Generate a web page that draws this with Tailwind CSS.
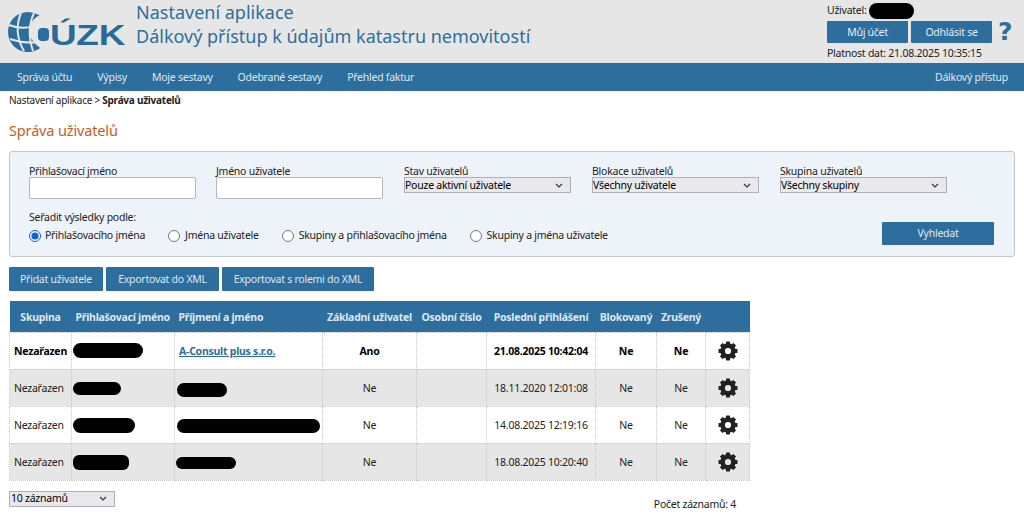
<!DOCTYPE html>
<html lang="cs">
<head>
  <meta charset="UTF-8" />
  <title>Správa uživatelů</title>
  <script src="https://cdn.jsdelivr.net/npm/@tailwindcss/browser@4"></script>
</head>
<body class="bg-white text-[#222] font-['Noto_Sans',sans-serif] text-[10.5px] tracking-[-0.25px] overflow-hidden">

  <svg class="hidden">
    <symbol id="gear" viewBox="0 0 20 20">
      <circle cx="10" cy="10" r="5.4" fill="none" stroke="#222" stroke-width="4.6"/>
      <g fill="#222">
        <rect x="8" y="0.5" width="4" height="4" rx="0.5"/>
        <rect x="8" y="0.5" width="4" height="4" rx="0.5" transform="rotate(45 10 10)"/>
        <rect x="8" y="0.5" width="4" height="4" rx="0.5" transform="rotate(90 10 10)"/>
        <rect x="8" y="0.5" width="4" height="4" rx="0.5" transform="rotate(135 10 10)"/>
        <rect x="8" y="0.5" width="4" height="4" rx="0.5" transform="rotate(180 10 10)"/>
        <rect x="8" y="0.5" width="4" height="4" rx="0.5" transform="rotate(225 10 10)"/>
        <rect x="8" y="0.5" width="4" height="4" rx="0.5" transform="rotate(270 10 10)"/>
        <rect x="8" y="0.5" width="4" height="4" rx="0.5" transform="rotate(315 10 10)"/>
      </g>
    </symbol>
    <symbol id="chevron" viewBox="0 0 8 5">
      <path d="M1 1l3 3 3-3" stroke="#333" stroke-width="1.2" fill="none"/>
    </symbol>
  </svg>

  <!-- Header -->
  <header class="h-[63px] bg-[#e6e6e6] flex">
    <svg class="ml-[7px] mt-[6px] w-[120px] h-[48px] shrink-0" viewBox="0 0 120 48">
      <circle cx="21" cy="26" r="20" fill="#2e6e9e"/>
      <path d="M2 19 Q20 26 38 15 M3 33 Q18 38 34 36 M14 7 Q6 26 17 45 M27 7 Q19 24 26 45" stroke="#e6e6e6" stroke-width="2" fill="none"/>
      <path d="M38 7 Q22 12 22 26 Q24 38 40 46 L50 46 L50 7Z" fill="#e6e6e6"/>
      <rect x="31" y="22" width="11" height="13" rx="4" fill="#2e6e9e"/>
      <text x="43" y="39" font-family="Liberation Sans" font-weight="700" font-size="30" textLength="75" lengthAdjust="spacingAndGlyphs" fill="#2a6a98">ÚZK</text>
    </svg>
    <div class="ml-[9px] text-[18px] tracking-normal leading-[24px] text-[#2e6e9e]">
      <div>Nastavení aplikace</div>
      <div>Dálkový přístup k údajům katastru nemovitostí</div>
    </div>
    <div class="ml-auto w-[197px] shrink-0 pt-[4px]">
      <div class="flex items-center h-[13px]">Uživatel:
        <span class="ml-[2px] w-[45px] h-[16px] bg-black rounded-full"></span>
      </div>
      <div class="flex items-center mt-[4px] gap-[3px]">
        <button class="w-[81px] h-[22px] pt-[1px] bg-[#2e6e9e] text-[#e4ecf3] rounded-[1px]">Můj účet</button>
        <button class="w-[81px] h-[22px] pt-[1px] bg-[#2e6e9e] text-[#e4ecf3] rounded-[1px]">Odhlásit se</button>
        <span class="ml-[3px] font-['DejaVu_Sans',sans-serif] font-bold text-[25px] leading-[22px] text-[#2e6e9e]">?</span>
      </div>
      <div class="mt-[3px] leading-[14px]">Platnost dat: 21.08.2025 10:35:15</div>
    </div>
  </header>

  <!-- Menu -->
  <nav class="h-[28px] pt-[1px] bg-[#2e6e9e] text-[#dfe8f0] flex items-center pl-[17px] pr-[16px] gap-[25px]">
    <a href="#">Správa účtu</a>
    <a href="#">Výpisy</a>
    <a href="#">Moje sestavy</a>
    <a href="#">Odebrané sestavy</a>
    <a href="#">Přehled faktur</a>
    <a href="#" class="ml-auto">Dálkový přístup</a>
  </nav>

  <main class="px-[9px]">
    <div class="h-[19px] flex items-center text-[10px]">Nastavení aplikace &gt;&nbsp;<strong>Správa uživatelů</strong></div>
    <h1 class="mt-[10px] text-[14.5px] tracking-[-0.15px] leading-[20px] text-[#cf5a1c]">Správa uživatelů</h1>

    <!-- Filter -->
    <section class="mt-[11px] w-[1006px] h-[106px] bg-[#eef3fa] border border-[#c4c8cc] rounded-[3px] relative pl-[19px]">
      <div class="flex pt-[13px]">
        <label class="w-[187px] block leading-[13px]">Přihlašovací jméno
          <input type="text" class="block mt-[-1px] w-[167px] h-[22px] bg-white border border-[#b5b5b5] rounded-[2px]" />
        </label>
        <label class="w-[188px] block leading-[13px]">Jméno uživatele
          <input type="text" class="block mt-[-1px] w-[167px] h-[22px] bg-white border border-[#b5b5b5] rounded-[2px]" />
        </label>
        <div class="w-[188px] leading-[13px]">Stav uživatelů
          <div class="mt-[-1px] w-[167px] h-[16px] bg-[#e9e9ed] border border-[#b0b0b0] flex items-center justify-between pr-[7px] text-black">Pouze aktivní uživatele
            <svg class="w-[8px] h-[5px]"><use href="#chevron"/></svg>
          </div>
        </div>
        <div class="w-[188px] leading-[13px]">Blokace uživatelů
          <div class="mt-[-1px] w-[167px] h-[16px] bg-[#e9e9ed] border border-[#b0b0b0] flex items-center justify-between pr-[7px] text-black">Všechny uživatele
            <svg class="w-[8px] h-[5px]"><use href="#chevron"/></svg>
          </div>
        </div>
        <div class="w-[167px] leading-[13px]">Skupina uživatelů
          <div class="mt-[-1px] w-[167px] h-[16px] bg-[#e9e9ed] border border-[#b0b0b0] flex items-center justify-between pr-[7px] text-black">Všechny skupiny
            <svg class="w-[8px] h-[5px]"><use href="#chevron"/></svg>
          </div>
        </div>
      </div>
      <div class="mt-[11px] leading-[14px]">Seřadit výsledky podle:</div>
      <div class="mt-[5px] flex items-center h-[14px]">
        <input type="radio" name="sort" checked class="w-[12px] h-[12px] m-0 accent-[#0b62d6]" />
        <span class="ml-[4px] mr-[23px]">Přihlašovacího jména</span>
        <input type="radio" name="sort" class="w-[12px] h-[12px] m-0" />
        <span class="ml-[5px] mr-[23px]">Jména uživatele</span>
        <input type="radio" name="sort" class="w-[12px] h-[12px] m-0" />
        <span class="ml-[5px] mr-[23px]">Skupiny a přihlašovacího jména</span>
        <input type="radio" name="sort" class="w-[12px] h-[12px] m-0" />
        <span class="ml-[5px]">Skupiny a jména uživatele</span>
      </div>
      <button class="absolute right-[20px] top-[70px] w-[112px] h-[23px] pt-[1px] bg-[#2e6e9e] text-[#dfe8f0] rounded-[1px]">Vyhledat</button>
    </section>

    <!-- Actions -->
    <div class="mt-[10px] flex gap-[3px] h-[24px]">
      <button class="w-[94px] pt-[1px] bg-[#2e6e9e] text-[#dfe8f0] rounded-[1px]">Přidat uživatele</button>
      <button class="w-[113px] pt-[1px] bg-[#2e6e9e] text-[#dfe8f0] rounded-[1px]">Exportovat do XML</button>
      <button class="w-[152px] pt-[1px] bg-[#2e6e9e] text-[#dfe8f0] rounded-[1px]">Exportovat s rolemi do XML</button>
    </div>

    <!-- Table -->
    <table class="mt-[10px] w-[740px] table-fixed border-collapse [&_td]:border [&_td]:border-dotted [&_td]:border-[#c8c8c8] [&_td]:pt-[2px] [&_th]:pt-[3px]">
      <colgroup>
        <col class="w-[62px]" /><col class="w-[103px]" /><col class="w-[148px]" /><col class="w-[94px]" /><col class="w-[70px]" /><col class="w-[109px]" /><col class="w-[61px]" /><col class="w-[49px]" /><col class="w-[44px]" />
      </colgroup>
      <thead class="bg-[#2e6e9e] text-[#dfe8f0] font-bold whitespace-nowrap">
        <tr class="h-[31px]">
          <th>Skupina</th><th class="text-left pl-[4px]">Přihlašovací jméno</th><th class="text-left pl-[4px]">Příjmení a jméno</th><th>Základní uživatel</th><th>Osobní číslo</th><th>Poslední přihlášení</th><th>Blokovaný</th><th>Zrušený</th><th></th>
        </tr>
      </thead>
      <tbody>
        <tr class="h-[37px] font-bold text-black">
          <td class="pl-[4px]">Nezařazen</td>
          <td class="pl-[1px]"><span class="block w-[70px] h-[15px] mt-[-3px] bg-black rounded-full"></span></td>
          <td class="pl-[4px]"><a href="#" class="text-[#2e6e9e] underline">A-Consult plus s.r.o.</a></td>
          <td class="text-center">Ano</td>
          <td></td>
          <td class="text-center">21.08.2025 10:42:04</td>
          <td class="text-center">Ne</td>
          <td class="text-center">Ne</td>
          <td><svg class="mx-auto mt-[-2px] w-[20px] h-[20px]"><use href="#gear"/></svg></td>
        </tr>
        <tr class="h-[37px] bg-[#e6e6e6]">
          <td class="pl-[4px]">Nezařazen</td>
          <td class="pl-[1px]"><span class="block w-[48px] h-[13px] bg-black rounded-full"></span></td>
          <td class="pl-[2px]"><span class="block w-[50px] h-[14px] bg-black rounded-full mt-[2px]"></span></td>
          <td class="text-center">Ne</td>
          <td></td>
          <td class="text-center">18.11.2020 12:01:08</td>
          <td class="text-center">Ne</td>
          <td class="text-center">Ne</td>
          <td><svg class="mx-auto mt-[-2px] w-[20px] h-[20px]"><use href="#gear"/></svg></td>
        </tr>
        <tr class="h-[37px]">
          <td class="pl-[4px]">Nezařazen</td>
          <td class="pl-[1px]"><span class="block w-[62px] h-[15px] bg-black rounded-full"></span></td>
          <td class="pl-[2px]"><span class="block w-[143px] h-[14px] bg-black rounded-full"></span></td>
          <td class="text-center">Ne</td>
          <td></td>
          <td class="text-center">14.08.2025 12:19:16</td>
          <td class="text-center">Ne</td>
          <td class="text-center">Ne</td>
          <td><svg class="mx-auto mt-[-2px] w-[20px] h-[20px]"><use href="#gear"/></svg></td>
        </tr>
        <tr class="h-[37px] bg-[#e6e6e6]">
          <td class="pl-[4px]">Nezařazen</td>
          <td class="pl-[1px]"><span class="block w-[56px] h-[15px] bg-black rounded-[6px]"></span></td>
          <td class="pl-[1px]"><span class="block w-[60px] h-[12px] bg-black rounded-full"></span></td>
          <td class="text-center">Ne</td>
          <td></td>
          <td class="text-center">18.08.2025 10:20:40</td>
          <td class="text-center">Ne</td>
          <td class="text-center">Ne</td>
          <td><svg class="mx-auto mt-[-2px] w-[20px] h-[20px]"><use href="#gear"/></svg></td>
        </tr>
      </tbody>
    </table>

    <!-- Pager -->
    <div class="w-[727px] flex justify-between mt-[10px]">
      <div class="w-[106px] h-[16px] bg-[#e9e9ed] border border-[#b0b0b0] flex items-center justify-between pl-[1px] pr-[7px] text-black">10 záznamů
        <svg class="w-[8px] h-[5px]"><use href="#chevron"/></svg>
      </div>
      <div class="mt-[6px] leading-[14px]">Počet záznamů: 4</div>
    </div>
  </main>
</body>
</html>
